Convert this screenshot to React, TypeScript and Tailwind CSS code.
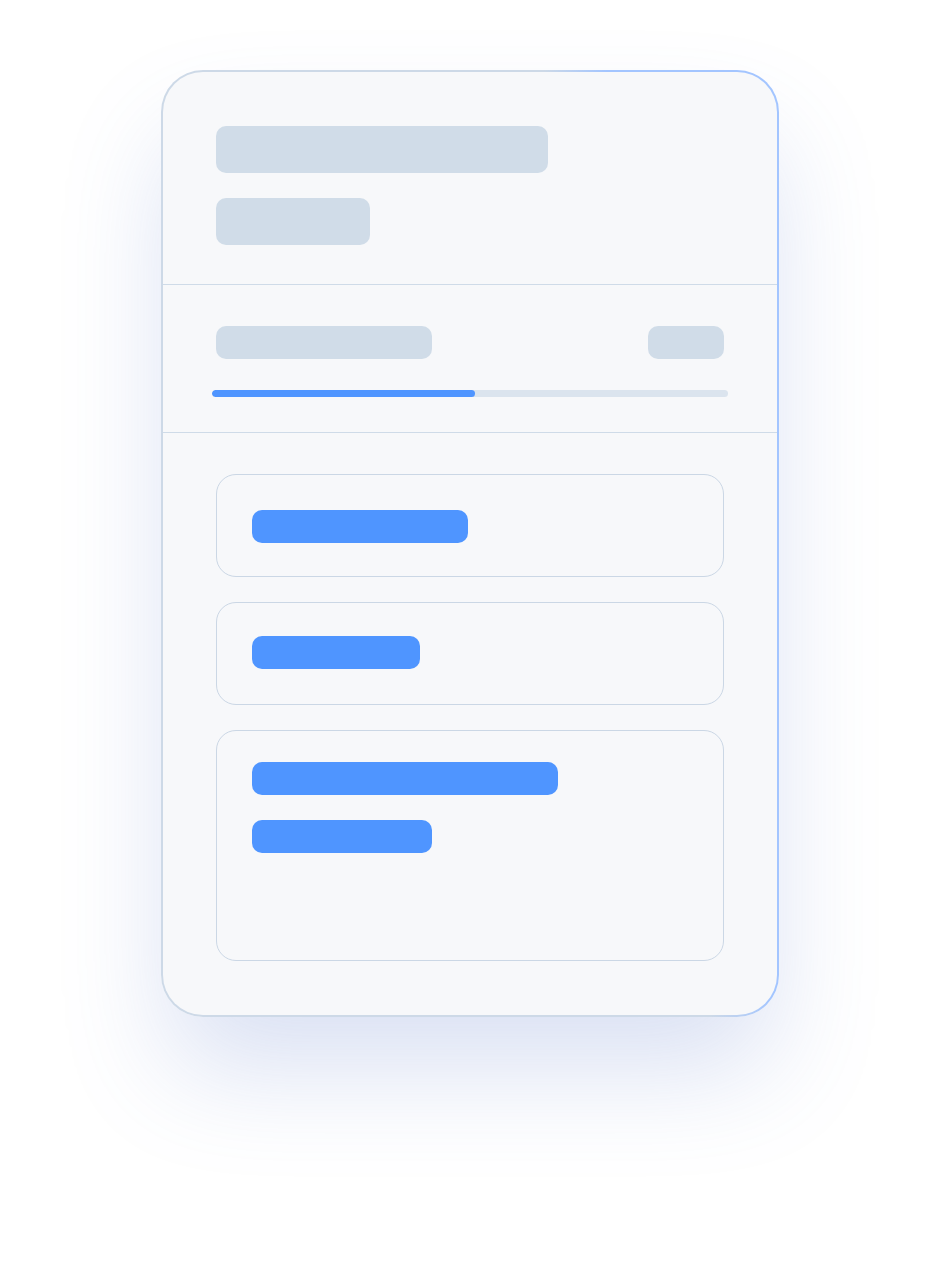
export default function App() {
  return (
    <div className="min-h-[1268px] w-full bg-white pt-[70px] font-['Inter',sans-serif]">
      <div className="mx-auto w-[618px] rounded-[42px] p-[2px] bg-[linear-gradient(80deg,#cdd9e7_0%,#cdd9e7_70%,#a3c5ff_78%,#a3c5ff_100%)] shadow-[0_60px_110px_-10px_rgba(80,115,200,0.22)]">
        <div className="rounded-[40px] bg-[#f7f8fa] overflow-hidden">
          <div className="flex flex-col gap-[25px] px-[53px] pt-[54px] pb-[39px]">
            <div className="h-[47px] w-[332px] rounded-[10px] bg-[#d0dce8]" />
            <div className="h-[47px] w-[154px] rounded-[10px] bg-[#d0dce8]" />
          </div>
          <div className="h-px bg-[#cfdbe8]" />
          <div className="px-[49px] pt-[41px] pb-[35px]">
            <div className="flex items-center justify-between px-[4px]">
              <div className="h-[33px] w-[216px] rounded-[10px] bg-[#d0dce8]" />
              <div className="h-[33px] w-[76px] rounded-[10px] bg-[#d0dce8]" />
            </div>
            <div className="mt-[31px] h-[7px] w-full rounded-full bg-[#dbe4ee] overflow-hidden">
              <div className="h-full w-[51%] rounded-full bg-[#4f95ff]" />
            </div>
          </div>
          <div className="h-px bg-[#cfdbe8]" />
          <div className="flex flex-col gap-[25px] px-[53px] pt-[41px] pb-[54px]">
            <div className="h-[103px] rounded-[20px] border-[1.5px] border-[#cbd7e5] px-[34.5px] pt-[34.5px]">
              <div className="h-[33px] w-[216px] rounded-[10px] bg-[#4f95ff]" />
            </div>
            <div className="h-[103px] rounded-[20px] border-[1.5px] border-[#cbd7e5] px-[34.5px] pt-[32.5px]">
              <div className="h-[33px] w-[168px] rounded-[10px] bg-[#4f95ff]" />
            </div>
            <div className="flex h-[231px] flex-col gap-[25px] rounded-[20px] border-[1.5px] border-[#cbd7e5] px-[34.5px] pt-[30.5px]">
              <div className="h-[33px] w-[306px] rounded-[10px] bg-[#4f95ff]" />
              <div className="h-[33px] w-[180px] rounded-[10px] bg-[#4f95ff]" />
            </div>
          </div>
        </div>
      </div>
    </div>
  );
}
